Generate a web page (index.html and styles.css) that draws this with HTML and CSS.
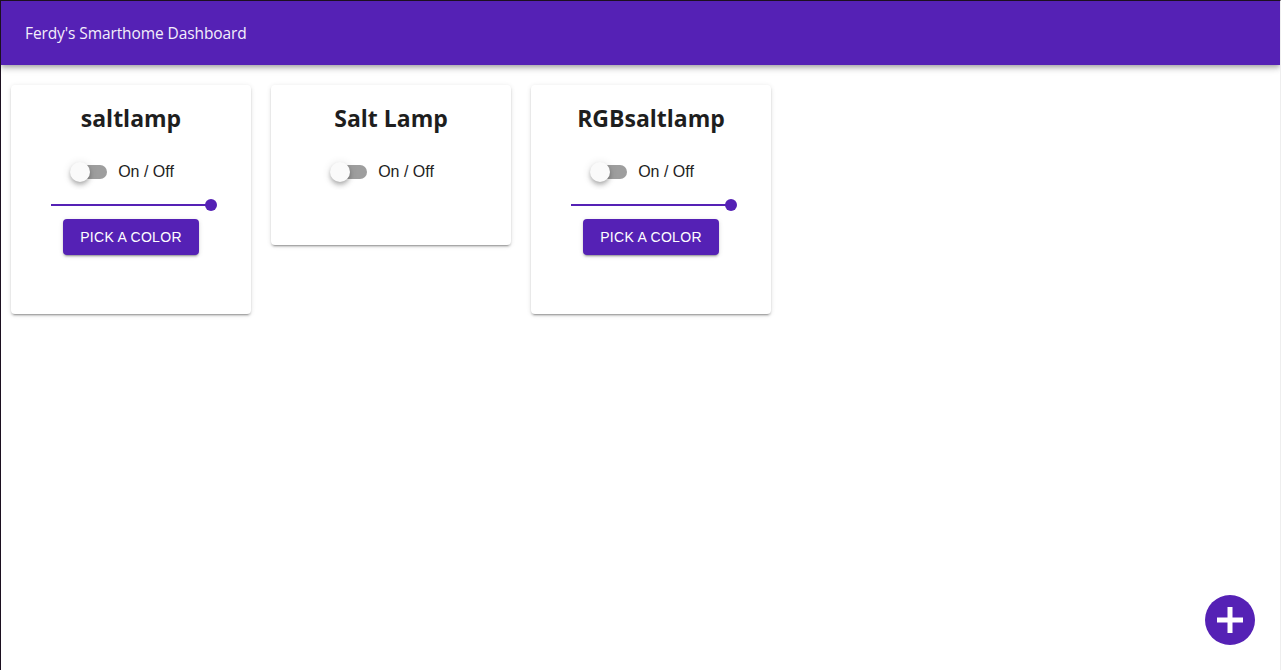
FILE: index.html
```html
<!DOCTYPE html>
<html lang="en">
<head>
<meta charset="utf-8">
<title>Ferdy's Smarthome Dashboard</title>
<link rel="stylesheet" href="styles.css">
</head>
<body>
<header class="app-bar">
  <div class="app-title">Ferdy's Smarthome Dashboard</div>
</header>
<main class="devices">
  <section class="card">
    <h2 class="card-title">saltlamp</h2>
    <label class="switch-row">
      <span class="switch"><span class="track"></span><span class="thumb"></span></span>
      <span class="switch-label">On / Off</span>
    </label>
    <div class="slider"><span class="slider-thumb"></span></div>
    <button class="btn">Pick a color</button>
  </section>
  <section class="card">
    <h2 class="card-title">Salt Lamp</h2>
    <label class="switch-row">
      <span class="switch"><span class="track"></span><span class="thumb"></span></span>
      <span class="switch-label">On / Off</span>
    </label>
  </section>
  <section class="card">
    <h2 class="card-title">RGBsaltlamp</h2>
    <label class="switch-row">
      <span class="switch"><span class="track"></span><span class="thumb"></span></span>
      <span class="switch-label">On / Off</span>
    </label>
    <div class="slider"><span class="slider-thumb"></span></div>
    <button class="btn">Pick a color</button>
  </section>
</main>
<button class="fab" aria-label="Add device">
  <svg width="26" height="26" viewBox="0 0 26 26"><rect x="10.5" y="0" width="5" height="26" fill="#fff"/><rect x="0" y="10.5" width="26" height="5" fill="#fff"/></svg>
</button>
</body>
</html>
```

FILE: styles.css
```css
* { box-sizing: border-box; }
html, body { height: 100%; }
body {
  margin: 0;
  background: #fff;
  border-left: 1px solid #1c1020;
  border-top: 1px solid #1c1020;
  border-right: 1px solid #eeeeee;
  font-family: "Liberation Sans", Arial, sans-serif;
  color: rgba(0,0,0,.87);
}
.app-bar {
  height: 64px;
  background: #5521b5;
  display: flex;
  align-items: center;
  padding-left: 24px;
  box-shadow: 0 2px 4px -1px rgba(0,0,0,.2), 0 4px 5px 0 rgba(0,0,0,.14), 0 1px 10px 0 rgba(0,0,0,.12);
  position: relative;
  z-index: 2;
}
.app-title {
  font-family: "Open Sans", sans-serif;
  font-size: 15.5px;
  color: #f3eefb;
  letter-spacing: -0.1px;
}
.devices {
  display: flex;
  align-items: flex-start;
  gap: 20px;
  padding: 20px 10px;
}
.card {
  width: 240px;
  background: #fff;
  border-radius: 4px;
  box-shadow: 0 3px 1px -2px rgba(0,0,0,.2), 0 2px 2px 0 rgba(0,0,0,.14), 0 1px 5px 0 rgba(0,0,0,.12);
  display: flex;
  flex-direction: column;
  align-items: center;
  padding: 15px 0 59px;
}
.card-title {
  margin: 0;
  font-family: "Open Sans", sans-serif;
  font-weight: 700;
  font-size: 23px;
  line-height: 36px;
  color: #1e1e1e;
}
.switch-row {
  display: flex;
  align-items: center;
  height: 24px;
  margin-top: 24px;
  margin-right: 18px;
  margin-bottom: 2px;
}
.switch {
  position: relative;
  width: 37px;
  height: 24px;
}
.track {
  position: absolute;
  left: 1px;
  top: 5px;
  width: 36px;
  height: 14px;
  border-radius: 7px;
  background: #9e9e9e;
}
.thumb {
  position: absolute;
  left: 0;
  top: 2px;
  width: 20px;
  height: 20px;
  border-radius: 50%;
  background: #fafafa;
  box-shadow: 0 2px 4px -1px rgba(0,0,0,.2), 0 4px 5px 0 rgba(0,0,0,.14), 0 1px 10px 0 rgba(0,0,0,.12);
}
.switch-label {
  margin-left: 11px;
  font-size: 16px;
  color: #222;
}
.slider {
  position: relative;
  width: 160px;
  height: 2px;
  margin-top: 18px;
  background: #5521b5;
}
.slider-thumb {
  position: absolute;
  right: -6px;
  top: -5px;
  width: 12px;
  height: 12px;
  border-radius: 50%;
  background: #5521b5;
}
.btn {
  margin-top: 13px;
  width: 136px;
  height: 36px;
  border: 0;
  border-radius: 4px;
  background: #5521b5;
  color: #ffffff;
  font-family: "Liberation Sans", Arial, sans-serif;
  font-size: 14px;
  letter-spacing: 0.3px;
  text-transform: uppercase;
  box-shadow: 0 3px 1px -2px rgba(0,0,0,.2), 0 2px 2px 0 rgba(0,0,0,.14), 0 1px 5px 0 rgba(0,0,0,.12);
  padding: 0;
}
.fab {
  position: fixed;
  right: 26px;
  bottom: 25px;
  width: 50px;
  height: 50px;
  border: 0;
  border-radius: 50%;
  background: #5521b5;
  display: flex;
  align-items: center;
  justify-content: center;
  padding: 0;
}
```
